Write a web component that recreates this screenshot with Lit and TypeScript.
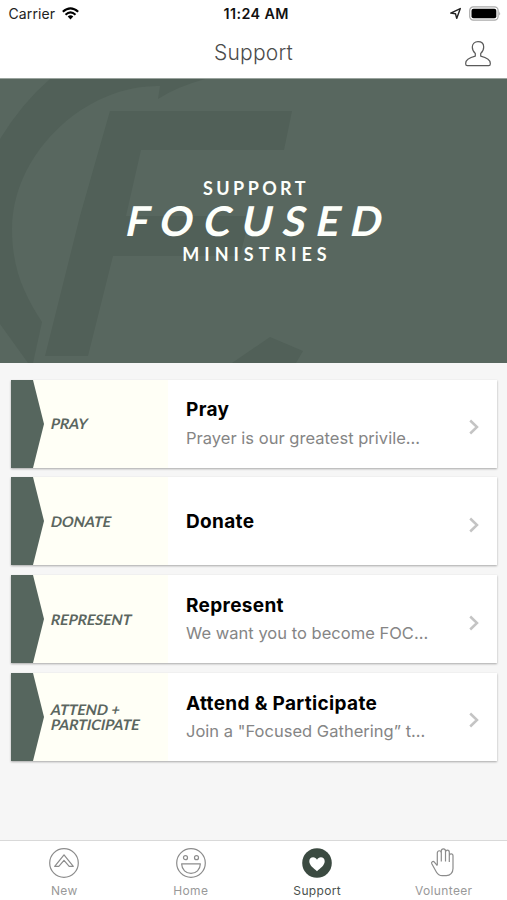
import { LitElement, html, svg, css } from "lit";
import { customElement, property } from "lit/decorators.js";

const tabIcons: Record<string, unknown> = {
  new: svg`<circle cx="16" cy="16" r="14.3"/><path d="M16 7.8 25.3 19.4H21.2L16 13.3 10.8 19.4H6.7Z"/>`,
  home: svg`<circle cx="16" cy="16" r="14.3"/><circle cx="10.5" cy="10.7" r="2"/><circle cx="21.5" cy="10.7" r="2"/><path d="M6.6 16.8H25.4C25.2 22.8 21 26.4 16 26.4S6.8 22.8 6.6 16.8Z"/>`,
  support: svg`<circle class="disc" cx="16" cy="16" r="14.8"/><path class="heart" d="M16 24.2C12.6 21.2 8.3 18.2 8.3 14.2 8.3 11.8 10 10.2 12.1 10.2 13.8 10.2 15.3 11.1 16 12.7 16.7 11.1 18.2 10.2 19.9 10.2 22 10.2 23.7 11.8 23.7 14.2 23.7 18.2 19.4 21.2 16 24.2Z"/>`,
  volunteer: svg`<path d="M9.3 18.2V6C9.3 3 13.3 3 13.3 6V14.5M13.3 6V4C13.3 1.1 17.5 1.1 17.5 4V14.5M17.5 5.2C17.5 2.4 21.3 2.4 21.3 5.2V15M21.3 8.8C21.3 6.1 25 6.1 25 8.8V21.5C25 25.6 22.2 28.6 18.3 28.6H14.2C11.4 28.6 9.7 27.3 8.5 25.2L3.8 16.8C2.9 14.9 5.1 13.7 6.4 15.2L9.3 18.6"/>`,
};

@customElement("status-bar")
class StatusBar extends LitElement {
  static styles = css`
    :host { display: grid; grid-template-columns: 1fr auto 1fr; height: 28px; align-items: center; padding: 0 6px 2px 8.5px; box-sizing: border-box; font-size: 14px; color: #222; }
    .left, .right { display: flex; align-items: center; }
    .carrier { letter-spacing: .12px; }
    .wifi { margin-left: 6.5px; }
    .time { font-weight: 600; font-size: 14.3px; letter-spacing: .42px; color: #111; padding-left: 3px; }
    .right { justify-content: flex-end; gap: 7px; }
  `;
  render() {
    return html`
      <div class="left"><span class="carrier">Carrier</span>
        <svg class="wifi" width="17" height="13" viewBox="0 0 17 13"><g fill="none" stroke="#000" stroke-width="2.1"><path d="M.8 4.8Q8.5-2.1 16.2 4.8"/><path d="M3.5 7.7Q8.5 3.2 13.5 7.7"/></g><path d="M5.7 9.5Q8.5 7.2 11.3 9.5L8.5 12.5Z"/></svg>
      </div>
      <span class="time">11:24 AM</span>
      <div class="right">
        <svg width="13" height="13" viewBox="0 0 13 13"><path d="M1.7 6.1 11.3 1.6 7.7 11.4 6.5 6.8Z" fill="none" stroke="#222" stroke-width="1.4" stroke-linejoin="round"/></svg>
        <svg width="32" height="15" viewBox="0 0 32 15"><rect x=".7" y=".9" width="28.4" height="13.2" rx="3.6" fill="#fff" stroke="#aaa" stroke-width="1.2"/><rect x="2.5" y="2.7" width="24.8" height="9.6" rx="2" fill="#000"/><path d="M30.2 5.2Q32 7.5 30.2 9.6Z" fill="#aaa"/></svg>
      </div>`;
  }
}

@customElement("nav-bar")
class NavBar extends LitElement {
  static styles = css`
    :host { display: grid; grid-template-columns: 1fr auto 1fr; height: 50.5px; align-items: center; border-bottom: 1px solid #99a39d; box-sizing: border-box; }
    .title { grid-column: 2; font-size: 21px; font-weight: 300; letter-spacing: .2px; color: #4c4c4c; }
    .person { justify-self: end; margin: 3px 15px 0 0; }
  `;
  render() {
    return html`<span class="title">Support</span>
      <svg class="person" width="28" height="28" viewBox="0 0 28 28" fill="none" stroke="#5a5a5a" stroke-width="1.2" stroke-linejoin="round"><path d="M11.3 16.1V13.5C9.2 11.7 8.3 9.3 8.3 7 8.3 3.7 10.7 1.7 14 1.7S19.7 3.7 19.7 7C19.7 9.3 18.8 11.7 16.7 13.5V16.1C21.5 17.3 26.3 18.8 26.3 23.2V24.1Q26.3 25.7 24.7 25.7H3.3Q1.7 25.7 1.7 24.1V23.2C1.7 18.8 6.5 17.3 11.3 16.1Z"/></svg>`;
  }
}

@customElement("hero-banner")
class HeroBanner extends LitElement {
  static styles = css`
    :host { display: grid; height: 284px; overflow: hidden; background: #58675f; }
    .art, .words { grid-area: 1 / 1; }
    .words { z-index: 1; display: flex; flex-direction: column; align-items: center; font-family: Lato, "Open Sans", sans-serif; color: #fdfffb; padding-top: 98px; white-space: nowrap; }
    .small { font-size: 18px; line-height: 22px; font-weight: 700; }
    .support { letter-spacing: 3.4px; padding-left: 5px; }
    .ministries { letter-spacing: 5px; padding-left: 7px; }
    .large { font-size: 41px; line-height: 44px; font-weight: 700; letter-spacing: 10.8px; padding-left: 13px; transform: skewX(-12deg); }
  `;
  render() {
    return html`
      <svg class="art" width="507" height="284" viewBox="0 0 507 284" fill="#516058">
        <path d="M50 0H205Q176 8 158 20L160 7Q120 6 81 31C38 60 12 105 12 150 12 190 24 215 42 243L33 284H28L0 245V60Q22 24 50 0Z"/>
        <path d="M110 32H292L284 71H141L126 137H250L240 177H113L88 277H45L80 137Z"/>
        <path d="M232 284 270 258 303 272 296 284Z"/>
      </svg>
      <div class="words"><span class="small support">SUPPORT</span><span class="large">FOCUSED</span><span class="small ministries">MINISTRIES</span></div>`;
  }
}

@customElement("link-card")
class LinkCard extends LitElement {
  @property({ type: Array }) label: string[] = [];
  @property() heading = "";
  @property() summary = "";
  static styles = css`
    :host { display: flex; align-items: center; height: 88px; background: #fff; box-shadow: 0 1px 2px rgba(0,0,0,.32); }
    .thumb { display: flex; align-items: center; width: 157px; height: 88px; background: #fffff6; flex: none; }
    .arrow { flex: none; }
    .label { margin-left: 7px; padding-top: 2px; font: 700 14.5px/14.5px Lato, sans-serif; color: #5b665f; white-space: nowrap; }
    .line { display: block; width: max-content; transform: skewX(-12deg); }
    .text { width: 250px; margin-left: 18px; padding-top: 1px; display: flex; flex-direction: column; gap: 4.5px; white-space: nowrap; }
    .heading { font-size: 19px; line-height: 24px; font-weight: 650; letter-spacing: .33px; color: #000; }
    .summary { font-size: 16.5px; line-height: 23px; letter-spacing: .02px; color: #858585; }
    .chevron { margin: 7px 0 0 auto; padding-right: 17px; }
  `;
  render() {
    return html`
      <div class="thumb">
        <svg class="arrow" width="33" height="88" viewBox="0 0 33 88"><path d="M0 0H22L33 44 22 88H0Z" fill="#56665e"/></svg>
        <span class="label">${this.label.map((l) => html`<span class="line">${l}</span>`)}</span>
      </div>
      <div class="text"><span class="heading">${this.heading}</span>${this.summary ? html`<span class="summary">${this.summary}</span>` : ""}</div>
      <svg class="chevron" width="12" height="16" viewBox="0 0 12 16"><path d="M2.2 1.5 9 8 2.2 14.5" fill="none" stroke="#c4c4c4" stroke-width="2.5"/></svg>`;
  }
}

@customElement("tab-item")
class TabItem extends LitElement {
  @property() icon = "";
  @property() label = "";
  @property({ type: Boolean, reflect: true }) active = false;
  static styles = css`
    :host { display: flex; flex-direction: column; align-items: center; padding-top: 6px; color: #999; font-size: 12px; }
    :host([active]) { color: #4a514d; }
    .icon { fill: none; stroke: #8c8c8c; stroke-width: 1.2; stroke-linejoin: round; }
    .disc { fill: #3b4a41; stroke: none; }
    .heart { fill: #fff; stroke: none; }
    .label { line-height: 16px; margin-top: 4px; letter-spacing: .35px; }
  `;
  render() {
    return html`<svg class="icon" width="32" height="32" viewBox="0 0 32 32">${tabIcons[this.icon]}</svg><span class="label">${this.label}</span>`;
  }
}

const cards = [
  { label: ["PRAY"], heading: "Pray", summary: "Prayer is our greatest privile..." },
  { label: ["DONATE"], heading: "Donate", summary: "" },
  { label: ["REPRESENT"], heading: "Represent", summary: "We want you to become FOC..." },
  { label: ["ATTEND +", "PARTICIPATE"], heading: "Attend & Participate", summary: "Join a \"Focused Gathering” t..." },
];

@customElement("app-root")
class AppRoot extends LitElement {
  static styles = css`
    :host { display: flex; flex-direction: column; height: 900px; width: 507px; overflow: hidden; background: #f6f6f6; font-family: Inter, "Liberation Sans", sans-serif; }
    .top { background: #fff; }
    .cards { flex: 1; display: flex; flex-direction: column; gap: 9.75px; padding: 17px 10px 0 11px; }
    .tabs { display: grid; grid-template-columns: repeat(4, 1fr); height: 60px; box-sizing: border-box; border-top: 1px solid #d9d9d9; background: #fff; padding-left: 1px; }
  `;
  render() {
    return html`
      <div class="top"><status-bar></status-bar><nav-bar></nav-bar></div>
      <hero-banner></hero-banner>
      <div class="cards">${cards.map((c) => html`<link-card .label=${c.label} .heading=${c.heading} .summary=${c.summary}></link-card>`)}</div>
      <div class="tabs">
        <tab-item icon="new" label="New"></tab-item>
        <tab-item icon="home" label="Home"></tab-item>
        <tab-item icon="support" label="Support" active></tab-item>
        <tab-item icon="volunteer" label="Volunteer"></tab-item>
      </div>`;
  }
}
